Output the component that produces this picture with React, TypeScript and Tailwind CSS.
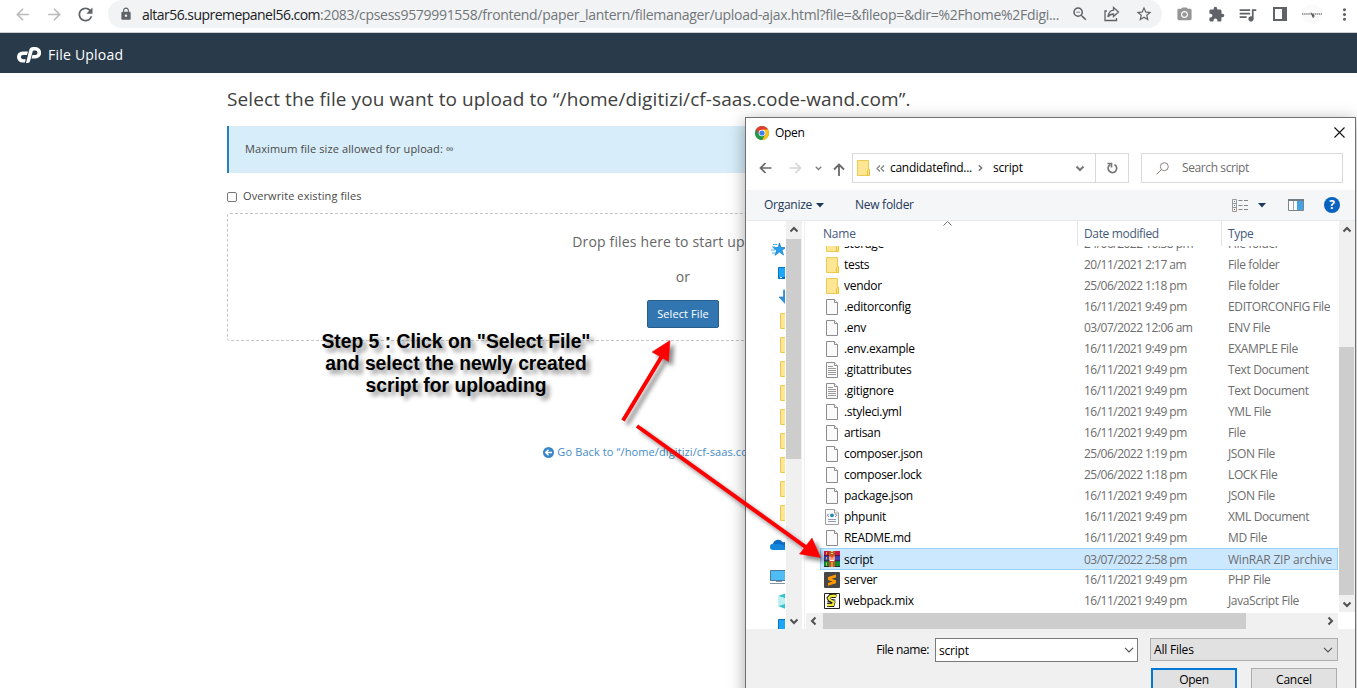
import type { ReactNode } from "react";
import {
  MdArrowBack,
  MdArrowForward,
  MdCameraAlt,
  MdExtension,
  MdLock,
  MdMoreVert,
  MdQueueMusic,
  MdRefresh,
  MdStarBorder,
  MdZoomOut,
} from "react-icons/md";

type FileKind = "folder" | "blank" | "text" | "xml" | "rar" | "sublime" | "js";
type FileRow = { name: string; date: string; type: string; kind: FileKind; selected?: boolean };

const files: FileRow[] = [
  { name: "storage", date: "24/06/2022 10:38 pm", type: "File folder", kind: "folder" },
  { name: "tests", date: "20/11/2021 2:17 am", type: "File folder", kind: "folder" },
  { name: "vendor", date: "25/06/2022 1:18 pm", type: "File folder", kind: "folder" },
  { name: ".editorconfig", date: "16/11/2021 9:49 pm", type: "EDITORCONFIG File", kind: "blank" },
  { name: ".env", date: "03/07/2022 12:06 am", type: "ENV File", kind: "blank" },
  { name: ".env.example", date: "16/11/2021 9:49 pm", type: "EXAMPLE File", kind: "blank" },
  { name: ".gitattributes", date: "16/11/2021 9:49 pm", type: "Text Document", kind: "text" },
  { name: ".gitignore", date: "16/11/2021 9:49 pm", type: "Text Document", kind: "text" },
  { name: ".styleci.yml", date: "16/11/2021 9:49 pm", type: "YML File", kind: "blank" },
  { name: "artisan", date: "16/11/2021 9:49 pm", type: "File", kind: "blank" },
  { name: "composer.json", date: "25/06/2022 1:19 pm", type: "JSON File", kind: "blank" },
  { name: "composer.lock", date: "25/06/2022 1:18 pm", type: "LOCK File", kind: "blank" },
  { name: "package.json", date: "16/11/2021 9:49 pm", type: "JSON File", kind: "blank" },
  { name: "phpunit", date: "16/11/2021 9:49 pm", type: "XML Document", kind: "xml" },
  { name: "README.md", date: "16/11/2021 9:49 pm", type: "MD File", kind: "blank" },
  { name: "script", date: "03/07/2022 2:58 pm", type: "WinRAR ZIP archive", kind: "rar", selected: true },
  { name: "server", date: "16/11/2021 9:49 pm", type: "PHP File", kind: "sublime" },
  { name: "webpack.mix", date: "16/11/2021 9:49 pm", type: "JavaScript File", kind: "js" },
];

function Folder() {
  return (
    <svg width="16" height="16" viewBox="0 0 16 16" className="shrink-0">
      <path d="M2.5.5h11v15h-11z" fill="#ffe694" stroke="#ecc94f" />
      <path d="M12.5 15.5v-5l1-1h1v6z" fill="#ffe694" stroke="#ecc02f" />
    </svg>
  );
}

function FileIcon({ kind }: { kind: FileKind }) {
  if (kind === "folder") return <Folder />;
  if (kind === "rar")
    return (
      <svg width="16" height="16" viewBox="0 0 16 16" className="shrink-0">
        <path d="M0 0h16v5H0z" fill="#c4164f" />
        <path d="M0 5h16v5H0z" fill="#3f3fae" />
        <path d="M0 10h16v6H0z" fill="#108a35" />
        <path d="M0 4.600h16M0 9.800h16M0 15.500h16" stroke="#2a1740" strokeWidth=".8" />
        <path d="M2.500 1v2.500M2.500 6v2.500M2.500 11.500v3" stroke="#f0c030" />
        <path d="M5 0h6v16H5z" fill="#b85a1c" />
        <path d="M8 0v4M8 11.500v4.500" stroke="#f0d27a" strokeWidth="2" strokeDasharray="1 1" />
        <path d="M5 4.500h6V11H5z" fill="#e0481c" />
        <path d="M6 5.500v4h4v-4M8 6.500v3" fill="none" stroke="#fff" strokeWidth="1" />
      </svg>
    );
  if (kind === "sublime")
    return (
      <svg width="16" height="16" viewBox="0 0 16 16" className="shrink-0">
        <rect width="16" height="16" rx="1" fill="#474747" />
        <path d="M12 2.500 4 5v3l4.500 1.500L4 11v2.800l8-2.600V8.300L7.500 6.800 12 5.400z" fill="#ff9800" />
      </svg>
    );
  if (kind === "js")
    return (
      <svg width="16" height="16" viewBox="0 0 16 16" className="shrink-0">
        <path d="M.5.500h15v15H.5z" fill="#fff" stroke="#222" />
        <path d="M12.500 3.500 10 2.300 6.500 2.800 4.500 5l1 2 4 2.500-.8 2.700L3 12.300" fill="none" stroke="#111" strokeWidth="3.600" />
        <path d="M12.500 3.500 10 2.600 6.500 3 4.700 5l1 1.600 4 2.600-.8 2.700L3 12.100" fill="none" stroke="#efe83c" strokeWidth="2.200" />
        <path d="M7.500 4.500h4M7.500 6.200l4 1M3.500 8.500l4 .8M3 10.200h4" stroke="#111" strokeWidth=".9" />
      </svg>
    );
  return (
    <svg width="16" height="16" viewBox="0 0 16 16" className="shrink-0">
      {kind !== "xml" && (
        <g>
          <path d="M2.500.5h8l3 3v12h-11z" fill="#fafafa" stroke="#8c8c8c" />
          <path d="M10.500.5v3h3" fill="#fff" stroke="#8c8c8c" />
        </g>
      )}
      {kind === "text" && <path d="M4 4.500h5M4 6.500h8M4 8.500h8M4 10.500h8M4 12.500h8" stroke="#9a9a9a" />}
      {kind === "xml" && (
        <g>
          <path d="M1.500.5h9l4 3.500v11.500h-13z" fill="#fafafa" stroke="#9c9c9c" />
          <path d="M10.500.5V4h4" fill="#fff" stroke="#9c9c9c" />
          <path d="M4 10.500h8M4 12.500h8" stroke="#8f9bb8" />
          <circle cx="8" cy="6.300" r="1.900" fill="#2289b5" />
          <path d="M4.800 4.800 3.300 6.300l1.500 1.500M11.200 4.800l1.500 1.500-1.500 1.500" fill="none" stroke="#3c4b86" strokeWidth=".8" />
        </g>
      )}
    </svg>
  );
}

function Chevron({ dir, className = "" }: { dir: "up" | "down" | "left" | "right"; className?: string }) {
  const d = {
    up: "M1.500 6.500 5 3l3.500 3.500",
    down: "M1.500 3.500 5 7l3.500-3.500",
    left: "M6.500 1.500 3 5l3.500 3.500",
    right: "M3.500 1.500 7 5 3.500 8.500",
  }[dir];
  return (
    <svg width="10" height="10" viewBox="0 0 10 10" className={`shrink-0 ${className}`}>
      <path d={d} fill="none" stroke="currentColor" strokeWidth="2" />
    </svg>
  );
}

function BrowserBar() {
  return (
    <div className="flex h-[33px] items-start border-b border-[#cfcfcf] bg-white">
      <div className="flex h-7 w-[108px] shrink-0 items-center pl-[13px] text-[#bababa]">
        <MdArrowBack size={19} />
        <MdArrowForward size={19} className="ml-[13px]" />
        <MdRefresh size={21} className="ml-[11px] text-[#5f6368]" />
      </div>
      <div className="flex h-7 w-[1054px] shrink-0 items-center rounded-full bg-[#f1f3f4] pl-[11px] text-[#5f6368]">
        <MdLock size={14} />
        <div className="ml-[9px] w-[929px] whitespace-nowrap font-['Open_Sans',sans-serif] text-[14px] tracking-[-0.300px] text-[#72767a]">
          <span className="tracking-[-0.530px] text-[#202124]">altar56.supremepanel56.com</span>
          :2083/cpsess9579991558/frontend/paper_lantern/filemanager/upload-ajax.html?file=&amp;fileop=&amp;dir=%2Fhome%2Fdigi...
        </div>
        <MdZoomOut size={18} className="shrink-0" />
        <svg width="18" height="18" viewBox="0 0 18 18" className="ml-[14px] shrink-0" fill="none" stroke="currentColor" strokeWidth="1.300">
          <path d="M4 6H2v9.500h11.500V13" />
          <path d="M10.500 2.500 15.500 7l-5 4.500V9C8 9 6.300 9.900 5 12c.3-4 2.400-6.500 5.500-6.900z" />
        </svg>
        <MdStarBorder size={18} className="ml-[14px] shrink-0" />
      </div>
      <div className="flex h-7 flex-1 items-center text-[#5f6368]">
        <MdCameraAlt size={17} className="ml-[14px] shrink-0 text-[#969696]" />
        <MdExtension size={17} className="ml-[15px] shrink-0" />
        <MdQueueMusic size={21} className="ml-[12px] shrink-0" />
        <svg width="14" height="14" viewBox="0 0 14 14" className="ml-[15px] shrink-0">
          <path d="M1 1h12v12H1z" fill="none" stroke="currentColor" strokeWidth="2" />
          <path d="M9 0h5v14H9z" fill="currentColor" />
        </svg>
        <svg width="20" height="20" viewBox="0 0 20 20" className="ml-[15px] shrink-0">
          <circle cx="10" cy="10" r="10" fill="#fafafa" />
          <path d="M0 10h20" stroke="#a5a5a5" strokeWidth="2" strokeDasharray="1.500 .6" />
          <path d="m8.500 8 5 4.500-2-.2.500 1.700-1.500-.5z" fill="#555" />
        </svg>
        <MdMoreVert size={19} className="ml-[13px] shrink-0" />
      </div>
    </div>
  );
}

function UploadPage() {
  return (
    <main className="ml-[227px] flex w-[912px] flex-col font-['Open_Sans',sans-serif] text-[#4a4a4a]">
      <h1 className="mt-[14px] h-[25px] whitespace-nowrap text-[19px] leading-[25px] tracking-[0.100px] text-[#404040]">
        Select the file you want to upload to “/home/digitizi/cf-saas.code-wand.com”.
      </h1>
      <div className="mt-[14px] flex h-[47px] items-center border-l-2 border-[#2980b9] bg-[#d7edf9] pl-[16px] text-[11px] tracking-[0.110px]">
        Maximum file size allowed for upload: ∞
      </div>
      <label className="mt-[13px] flex h-5 items-center gap-[6px] text-[11px] tracking-[0.090px]">
        <span className="mt-[2px] h-[10px] w-[10px] rounded-[2px] border border-[#767676] bg-white" />
        Overwrite existing files
      </label>
      <section className="mt-[7px] flex h-[128px] flex-col items-center rounded-[3px] border border-dashed border-[#c5c5c5] text-[14px] tracking-[0.160px] text-[#666]">
        <p className="mt-[18px] h-5 leading-5">Drop files here to start uploading</p>
        <p className="mt-[15px] h-5 leading-5">or</p>
        <button className="mt-[13px] flex h-[28px] w-[72px] items-center justify-center rounded-[2px] border border-[#285e8e] bg-[#3276b1] text-[11px] tracking-[0.100px] whitespace-nowrap text-white">
          Select File
        </button>
      </section>
      <a className="mx-auto mt-[101px] flex h-5 items-center gap-[3px] whitespace-nowrap text-[11px] tracking-[0.110px] text-[#428bca]">
        <svg width="11" height="11" viewBox="0 0 11 11">
          <circle cx="5.500" cy="5.500" r="5.500" fill="#3b86c8" />
          <path d="M9 5.500H3M5.500 2.800 2.800 5.500l2.700 2.700" fill="none" stroke="#fff" strokeWidth="1.500" />
        </svg>
        Go Back to “/home/digitizi/cf-saas.code-wand.com”
      </a>
    </main>
  );
}

function NavRow({ children, className = "" }: { children: ReactNode; className?: string }) {
  return <div className={`flex h-6 shrink-0 items-center ${className}`}>{children}</div>;
}

function NavPane() {
  return (
    <div className="flex w-[39px] shrink-0 flex-col overflow-hidden pt-4">
      <NavRow className="pl-[25px]">
        <svg width="16" height="14" viewBox="0 0 16 14" className="shrink-0">
          <path d="m8.500 1 1.500 4.500h5L11 8.300l1.500 4.700L8.500 10 4 13.300 5.500 8.500 2 5.500h5z" fill="#26a0ea" stroke="#1879bd" strokeWidth=".7" />
          <path d="M2 2.500h4M1 5h3M0 8h4M1 11h3" stroke="#4ab4f0" />
        </svg>
      </NavRow>
      <NavRow className="pl-8">
        <svg width="16" height="12" viewBox="0 0 16 12" className="shrink-0">
          <path d="M.5.500h15v11H.5z" fill="#1ca7fa" stroke="#0874bb" />
          <path d="M1 10.500h15" stroke="#0765a8" />
          <path d="M2 10.500h2" stroke="#fff" />
        </svg>
      </NavRow>
      <NavRow className="pl-8">
        <svg width="14" height="16" viewBox="0 0 14 16" className="shrink-0">
          <path d="M5.500 1h3v7h4.500L7 14.500 1 8h4.500z" fill="#2f8fdf" stroke="#1f78c4" strokeWidth=".6" />
        </svg>
      </NavRow>
      {Array.from({ length: 9 }, (_, i) => (
        <NavRow key={i} className="pl-8">
          <Folder />
        </NavRow>
      ))}
      <NavRow className="mt-2 pl-6">
        <svg width="18" height="12" viewBox="0 0 18 12" className="shrink-0">
          <path d="M3 10.500A3 3 0 0 1 3 4.700 5.500 5.500 0 0 1 13 3.500a4 4 0 0 1 4 7z" fill="#0a6cc4" />
          <path d="M3 11a3 3 0 0 1 0-6.300l10 .8 4 5.500z" fill="#1486dc" />
        </svg>
      </NavRow>
      <NavRow className="mt-2 pl-6">
        <svg width="18" height="16" viewBox="0 0 18 16" className="shrink-0">
          <path d="M.5 1.500h17v10H.5z" fill="#4fbcf5" stroke="#4b7b9a" />
          <path d="M6 12.500h6M0 14.500h18" stroke="#8496a3" />
        </svg>
      </NavRow>
      <NavRow className="pl-8">
        <svg width="16" height="16" viewBox="0 0 16 16" className="shrink-0">
          <path d="M0 3 8 0l8 3-8 2.500zM0 13l8-2.500 8 2.500-8 3z" fill="#36c5ce" />
          <path d="M0 3l8 2.500v5L0 13z" fill="#bdf0f2" />
        </svg>
      </NavRow>
      <NavRow className="pl-8">
        <svg width="16" height="12" viewBox="0 0 16 12" className="shrink-0">
          <path d="M.5.500h15v11H.5z" fill="#1ca7fa" stroke="#0874bb" />
        </svg>
      </NavRow>
    </div>
  );
}

function FileList() {
  return (
    <div className="flex w-[532px] shrink-0 flex-col">
      <div className="flex h-[25px] items-center tracking-[-0.350px] text-[#44597a]">
        <div className="relative w-[271px] pt-[1px] pl-[17px] tracking-[-0.200px]">
          Name
          <svg width="9" height="5" viewBox="0 0 9 5" className="absolute -top-[4px] left-[137px]">
            <path d="M.5 4.500 4.500.5l4 4" fill="none" stroke="#707070" />
          </svg>
        </div>
        <div className="flex h-full w-[144px] items-center border-l border-[#e3e3e3] pt-[1px] pl-[6px]">Date modified</div>
        <div className="flex h-full flex-1 items-center border-l border-[#e3e3e3] pt-[1px] pl-[6px]">Type</div>
      </div>
      <div className="h-[367px] overflow-hidden">
        <div className="-mt-[13px] flex flex-col">
          {files.map((f) => (
            <div
              key={f.name}
              className={
                f.selected
                  ? "ml-[14px] flex h-[22px] -mb-px shrink-0 items-center border border-[#99d1ff] bg-[#cce8ff] pl-[3px]"
                  : "ml-[15px] flex h-[21px] shrink-0 items-center pl-[3px]"
              }
            >
              <FileIcon kind={f.kind} />
              <span className="ml-1 w-[240px] pt-px tracking-[-0.300px] text-black">{f.name}</span>
              <span className="w-[144px] pt-px tracking-[-0.520px] text-[#6d6d6d]">{f.date}</span>
              <span
                className={
                  f.selected
                    ? "pt-px whitespace-nowrap tracking-[-0.220px] text-[#6d6d6d]"
                    : "pt-px whitespace-nowrap tracking-[-0.370px] text-[#6d6d6d]"
                }
              >
                {f.type}
              </span>
            </div>
          ))}
        </div>
      </div>
      <div className="flex h-4 items-center bg-[#f0f0f0] text-[#505050]">
        <Chevron dir="left" className="ml-[3px]" />
        <div className="ml-1 h-full w-[423px] bg-[#cdcdcd]" />
        <Chevron dir="right" className="ml-[79px]" />
      </div>
    </div>
  );
}

function OpenDialog() {
  return (
    <div className="absolute top-[117px] left-[745px] flex h-[620px] w-[611px] flex-col border border-[#707070] bg-white font-['Open_Sans',sans-serif] text-[12px] leading-[16px] text-black shadow-[0_4px_16px_rgba(0,0,0,0.350)]">
      <div className="flex h-[35px] shrink-0 items-center justify-between pr-[10px] pb-[6px] pl-[9px]">
        <div className="flex items-center gap-[6px]">
          <svg width="14" height="14" viewBox="0 0 14 14">
            <circle cx="7" cy="7" r="7" fill="#34a853" />
            <path d="M7 7 .94 3.500A7 7 0 0 1 13.060 3.500z" fill="#e33b2e" />
            <path d="M.94 3.500 4 9l3-2V3.500z" fill="#e33b2e" />
            <path d="M7 3.500h6.060A7 7 0 0 1 7 14l3-5.500z" fill="#fbc116" />
            <path d="M.94 3.500A7 7 0 0 0 7 14l3-5.200L7 10 4 8.700z" fill="#239a48" />
            <circle cx="7" cy="7" r="3.300" fill="#fff" />
            <circle cx="7" cy="7" r="2.600" fill="#3b82f0" />
          </svg>
          <span className="tracking-[-0.300px]">Open</span>
        </div>
        <svg width="11" height="11" viewBox="0 0 11 11">
          <path d="m.5.500 10 10M10.500.5l-10 10" stroke="#111" strokeWidth="1.100" />
        </svg>
      </div>
      <div className="flex h-[30px] items-center">
        <div className="flex w-[106px] shrink-0 items-center pl-[13px]">
          <svg width="13" height="12" viewBox="0 0 13 12" fill="none" stroke="#696969" strokeWidth="1.700">
            <path d="M12.500 6H1.500M6.500 1l-5 5 5 5" />
          </svg>
          <svg width="13" height="12" viewBox="0 0 13 12" className="ml-[17px]" fill="none" stroke="#d5d5d5" strokeWidth="1.700">
            <path d="M.5 6h11M6.500 1l5 5-5 5" />
          </svg>
          <svg width="7" height="5" viewBox="0 0 7 5" className="ml-[13px]" fill="none" stroke="#808080" strokeWidth="1.500">
            <path d="m.8.800 2.700 2.700L6.200.8" />
          </svg>
          <svg width="12" height="13" viewBox="0 0 12 13" className="ml-[11px] mt-[2px]" fill="none" stroke="#696969" strokeWidth="1.800">
            <path d="M6 13V1.500M1 6.500l5-5 5 5" />
          </svg>
        </div>
        <div className="flex h-[30px] w-[277px] shrink-0 items-center border border-[#d9d9d9]">
          <div className="ml-[2px] flex"><Folder /></div>
          <svg width="9" height="7" viewBox="0 0 9 7" className="ml-[5px]" fill="none" stroke="#777" strokeWidth="1.100">
            <path d="M4 .5 1 3.500l3 3M8 .5 5 3.500l3 3" />
          </svg>
          <span className="ml-[5px] w-[82px] tracking-[-0.280px]">candidatefind...</span>
          <Chevron dir="right" className="ml-[4px] h-[8px] w-[8px] text-[#777]" />
          <span className="ml-[9px] tracking-[-0.200px]">script</span>
          <Chevron dir="down" className="ml-auto text-[#777]" />
          <div className="ml-[10px] flex h-full w-[33px] items-center justify-center border-l border-[#d9d9d9]">
            <svg width="11" height="12" viewBox="0 0 11 12" fill="none" stroke="#757575" strokeWidth="1.700">
              <path d="M7.500 2.500A4.300 4.300 0 1 1 3 2.700M.5 1.500h4v4" />
            </svg>
          </div>
        </div>
        <div className="ml-3 flex h-[30px] w-[202px] items-center border border-[#d9d9d9] pl-[14px] text-[#6d6d6d]">
          <svg width="13" height="13" viewBox="0 0 13 13" fill="none" stroke="#8a8480">
            <circle cx="8.300" cy="4.700" r="4" />
            <path d="M5.500 7.500.5 12.500" />
          </svg>
          <span className="ml-[13px] tracking-[-0.400px]">Search script</span>
        </div>
      </div>
      <div className="mt-[7px] flex h-[31px] shrink-0 items-center border-b border-[#e7e9eb] bg-[#f5f6f7] pl-[18px] text-[#1e395b]">
        <span className="w-[48px] tracking-[-0.270px]">Organize</span>
        <svg width="8" height="5" viewBox="0 0 8 5" className="ml-[4px]"><path d="M0 0h8L4 4.500z" fill="#1e395b" /></svg>
        <span className="ml-[31px] tracking-[-0.270px]">New folder</span>
        <svg width="17" height="13" viewBox="0 0 17 13" className="ml-auto" fill="none">
          <path d="M.5.500h4v12h-4zM.5 4.500h4M.5 8.500h4" stroke="#9a9a9a" />
          <path d="M2 2.500h1M2 6.500h1" stroke="#4a83bd" />
          <path d="M2 10.500h1" stroke="#d33" />
          <path d="M6.500 1.500h4M12 1.500h4M6.500 6.500h4M12 6.500h4M6.500 10.500h4M12 10.500h4" stroke="#858585" />
        </svg>
        <svg width="8" height="5" viewBox="0 0 8 5" className="ml-[9px]"><path d="M0 0h8L4 4.500z" fill="#1e395b" /></svg>
        <svg width="16" height="12" viewBox="0 0 16 12" className="ml-[22px]">
          <path d="M.5 1h15v10.500H.5z" fill="#fff" stroke="#7b858c" />
          <path d="M0 1h16" stroke="#69757d" strokeWidth="1.800" />
          <path d="M5.500 2v9" stroke="#9ba4aa" />
          <path d="M9 2h6v9H9z" fill="#43a3e4" />
        </svg>
        <div className="mr-[15px] ml-5 flex h-4 w-4 items-center justify-center rounded-full bg-[#0763bf] text-[12px] font-bold text-white">?</div>
      </div>
      <div className="flex h-[408px] shrink-0">
        <NavPane />
        <div className="ml-px flex w-4 shrink-0 flex-col items-center bg-[#f0f0f0] text-[#505050]">
          <Chevron dir="up" className="my-[4px] shrink-0" />
          <div className="h-[220px] w-[15px] self-start bg-[#cdcdcd]" />
          <Chevron dir="down" className="mt-auto mb-[3px]" />
        </div>
        <div className="mr-px ml-[2px] w-px bg-[#f0f0f0]" />
        <FileList />
        <div className="ml-px flex h-[391px] w-[16px] flex-col items-center bg-[#f0f0f0] text-[#505050]">
          <Chevron dir="up" className="mt-1" />
          <div className="mt-[112px] h-[248px] w-[15px] self-start bg-[#cdcdcd]" />
          <Chevron dir="down" className="mt-[4px]" />
        </div>
      </div>
      <div className="flex flex-1 flex-col bg-[#f0f0f0] pt-[9px]">
        <div className="flex h-6 items-start">
          <span className="w-[189px] pt-[4px] pr-[6px] text-right tracking-[-0.430px]">File name:</span>
          <div className="flex h-6 w-[203px] items-center border border-[#7a7a7a] bg-white pr-[3px] pl-[3px]">
            <span className="flex-1 pt-px tracking-[-0.200px]">script</span>
            <svg width="10" height="6" viewBox="0 0 10 6"><path d="m1 .8 4 4 4-4" fill="none" stroke="#555" strokeWidth="1.200" /></svg>
          </div>
          <div className="ml-3 flex h-[23px] w-[188px] items-center border border-[#adadad] bg-[#e1e1e1] pr-[4px] pl-[3px]">
            <span className="flex-1 tracking-[-0.200px]">All Files</span>
            <svg width="10" height="6" viewBox="0 0 10 6"><path d="m1 .8 4 4 4-4" fill="none" stroke="#555" strokeWidth="1.200" /></svg>
          </div>
        </div>
        <div className="mt-[6px] flex pl-[405px]">
          <div className="flex h-6 w-[86px] items-center justify-center border-2 border-[#0078d7] bg-[#e1e1e1] tracking-[-0.300px]">Open</div>
          <div className="ml-[14px] flex h-6 w-[86px] items-center justify-center border border-[#adadad] bg-[#e1e1e1] tracking-[-0.200px]">Cancel</div>
        </div>
      </div>
    </div>
  );
}

function Annotations() {
  return (
    <>
      <div className="absolute top-[331px] left-[306px] w-[300px] text-center font-['Liberation_Sans',sans-serif] text-[19.300px] leading-[22px] font-bold whitespace-nowrap text-black [text-shadow:4px_4px_4px_rgba(0,0,0,0.450)]">
        Step 5 : Click on "Select File"
        <br />
        and select the newly created
        <br />
        script for uploading
      </div>
      <svg width="230" height="240" viewBox="610 330 230 240" className="absolute top-[330px] left-[610px] drop-shadow-[4px_4px_2px_rgba(0,0,0,0.450)]">
        <g fill="#f00" stroke="#f00">
          <path d="M623 420.500 662 356M637 426l170 122" strokeWidth="4" />
          <path d="M670 340.500 652 352l16.500 9.500zM820.500 557.500l-8.500-19.500-12.500 16z" strokeWidth=".5" />
        </g>
      </svg>
    </>
  );
}

export default function App() {
  return (
    <div className="relative h-[688px] w-[1357px] overflow-hidden bg-white">
      <BrowserBar />
      <header className="flex h-10 items-center bg-[#293a4a] pt-[3px] pl-[17px] font-['Open_Sans',sans-serif] text-[14px] text-white">
        <svg width="24" height="16" viewBox="0 0 24 16" fill="#fff">
          <path d="M11 4.400 10 8H6a2.100 2.100 0 0 0 0 4.200h2.800l-.9 3.400H5.600a5.600 5.600 0 0 1 0-11.200z" />
          <path d="M9 16 12.200 3.200Q13 0 16.300 0h2.200a5.700 5.700 0 0 1 0 11.400h-4l1-3.400h2.800a2.200 2.200 0 0 0 0-4.400h-1.700q-.7 0-.9.8L13 14.200Q12.400 16 10.800 16z" />
        </svg>
        <span className="ml-[7px] tracking-[0.220px]">File Upload</span>
      </header>
      <UploadPage />
      <OpenDialog />
      <Annotations />
    </div>
  );
}
